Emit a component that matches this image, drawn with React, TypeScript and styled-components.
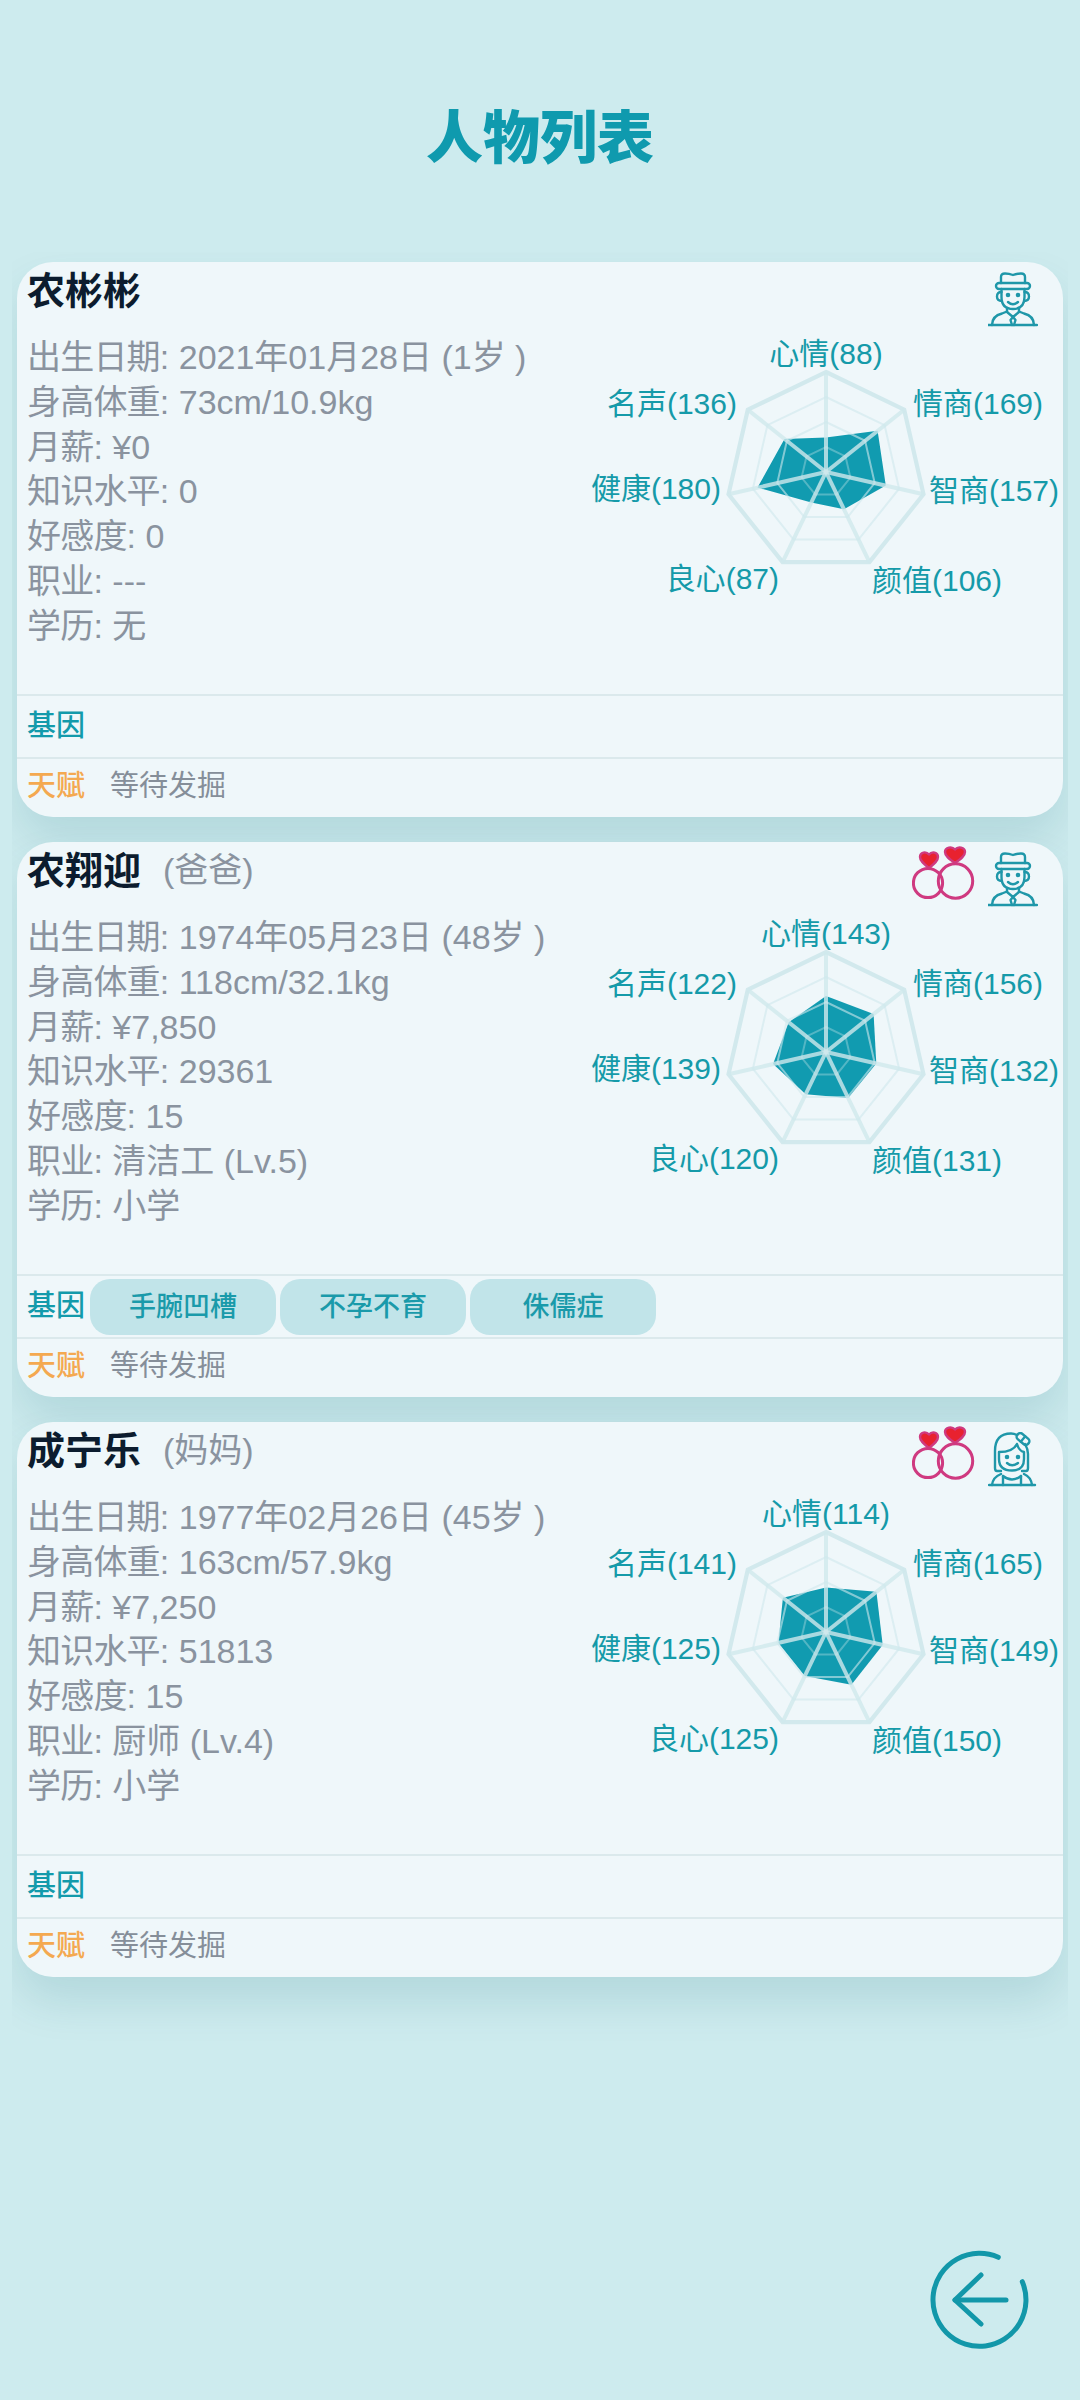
import React from "react";
import styled, { createGlobalStyle } from "styled-components";

const FONT = `"Liberation Sans", "Noto Sans CJK SC", sans-serif`;

const Global = createGlobalStyle`
  html, body { margin: 0; padding: 0; background: #cdebee; }
  body { font-family: ${FONT}; }
`;

const Page = styled.div`
  width: 1080px;
  height: 2400px;
  box-sizing: border-box;
  padding: 0 17px;
  display: flex;
  flex-direction: column;
  background: #cdebee;
  overflow: hidden;
`;

const Title = styled.h1`
  margin: 0;
  height: 262px;
  box-sizing: border-box;
  padding-top: 100px;
  text-align: center;
  font-size: 57px;
  line-height: 76px;
  font-weight: 900;
  color: #0f9aae;
`;

const List = styled.div`
  display: flex;
  flex-direction: column;
  gap: 25px;
  clip-path: inset(-10px -5px -160px -5px);
`;

const CardBox = styled.section`
  height: 555px;
  display: flex;
  flex-direction: column;
  background: #eff7fa;
  border-radius: 36px;
  box-shadow: 0 24px 44px rgba(10, 90, 110, 0.13);
  overflow: hidden;
`;

const Header = styled.div`
  height: 72px;
  flex: none;
  box-sizing: border-box;
  padding: 4px 25px 0 10px;
  display: flex;
  align-items: flex-start;
  justify-content: space-between;
`;

const NameLine = styled.div`
  display: flex;
  align-items: center;
  height: 42px;
`;

const Name = styled.span`
  font-size: 38px;
  font-weight: 700;
  color: #0c1c2e;
`;

const Relation = styled.span`
  margin-left: 22px;
  font-size: 34px;
  color: #8a939f;
`;

const Icons = styled.div`
  display: flex;
  align-items: flex-start;
  gap: 13px;
`;

const PersonIcon = styled.div`
  margin-top: 6px;
`;

const Body = styled.div`
  height: 360px;
  flex: none;
  display: flex;
  justify-content: space-between;
`;

const Info = styled.ul`
  list-style: none;
  margin: 0;
  padding: 1px 0 0 10px;
`;

const InfoRow = styled.li`
  height: 44.8px;
  line-height: 44.8px;
  font-size: 34px;
  color: #8a939f;
  white-space: nowrap;
`;

const InfoLabel = styled.span`
  letter-spacing: -0.8px;
`;

const RadarBox = styled.div`
  position: relative;
  width: 500px;
  height: 360px;
  flex: none;
`;

const RadarSvg = styled.svg`
  position: absolute;
  left: 153px;
  top: 28px;
  width: 220px;
  height: 220px;
`;

const AxisLabel = styled.span<{ $side: "left" | "right" | "center"; $x: number; $y: number }>`
  position: absolute;
  top: ${(p) => p.$y}px;
  ${(p) => (p.$side === "left" ? `right: ${p.$x}px;` : `left: ${p.$x}px;`)}
  ${(p) => (p.$side === "center" ? "transform: translateX(-50%);" : "")}
  height: 40px;
  line-height: 40px;
  font-size: 30px;
  color: #159aa9;
  white-space: nowrap;
`;

const Strip = styled.div<{ $h: number }>`
  height: ${(p) => p.$h}px;
  flex: none;
  box-sizing: border-box;
  border-top: 2px solid #dbe9ec;
  padding-left: 10px;
  display: flex;
  align-items: center;
`;

const StripLabel = styled.span<{ $talent?: boolean }>`
  width: 63px;
  flex: none;
  margin-top: ${(p) => (p.$talent ? "-10px" : "-7px")};
  font-size: 29px;
  font-weight: 500;
  color: ${(p) => (p.$talent ? "#f4a950" : "#139aab")};
`;

const Chips = styled.div`
  display: flex;
  gap: 4px;
  margin-top: 1px;
`;

const Chip = styled.span`
  width: 186px;
  height: 56px;
  box-sizing: border-box;
  padding-bottom: 5px;
  display: flex;
  align-items: center;
  justify-content: center;
  background: #c1e4e9;
  border-radius: 20px;
  font-size: 27px;
  font-weight: 500;
  color: #1a9aaa;
`;

const Pending = styled.span`
  margin-left: 20px;
  margin-top: -10px;
  font-size: 29px;
  color: #858e99;
`;

const Footer = styled.div`
  margin-top: auto;
  padding: 0 28px 45px 0;
  display: flex;
  justify-content: flex-end;
`;

const BackButton = styled.button`
  width: 110px;
  height: 110px;
  padding: 0;
  border: 0;
  background: none;
  display: block;
`;

const ManIcon = () => (
  <svg width="50" height="55" viewBox="0 0 50 55" fill="none" stroke="#1f97a9" strokeWidth="2.4" strokeLinecap="round" strokeLinejoin="round">
    <path d="M13 11V5Q13 1.5 17 1.5Q21 1.5 25 3Q29 1.5 33 1.5Q37 1.5 37 5V11" />
    <rect x="8" y="11" width="34" height="6" rx="3" />
    <path d="M13.5 17V25Q13.5 37 25 37Q36.5 37 36.5 25V17" />
    <path d="M13.5 20Q9 20 9 24.5Q9 29 14 29M36.5 20Q41 20 41 24.5Q41 29 36 29" />
    <circle cx="20" cy="23" r="1.1" fill="#1f97a9" />
    <circle cx="30" cy="23" r="1.1" fill="#1f97a9" />
    <path d="M20 30Q25 34.5 30 30" />
    <path d="M19 36V40L25 45L31 40V36" />
    <path d="M4 53Q4 44 14 41.5L19 39.5M46 53Q46 44 36 41.5L31 39.5" />
    <path d="M25 45L22.5 48L24 53M25 45L27.5 48L26 53" />
    <path d="M0.5 53H49" />
  </svg>
);

const WomanIcon = () => (
  <svg width="50" height="55" viewBox="0 0 50 55" fill="none" stroke="#1f97a9" strokeWidth="2.4" strokeLinecap="round" strokeLinejoin="round">
    <path d="M13 39H9Q7 39 7 36V19Q7 1.5 23 1.5Q26 1.5 29 3" />
    <path d="M34 39H38Q40 39 40 36V22Q40 17 37 12" />
    <path d="M11 20V27Q11 38.5 24 38.5Q36 38.5 36 27V20Q31 19 29 12Q25 20 11 20Z" />
    <g transform="rotate(40 35 7)">
      <rect x="28" y="3.5" width="14" height="7" rx="3" />
      <path d="M35 3.5V10.5" />
    </g>
    <circle cx="19" cy="25" r="1.1" fill="#1f97a9" />
    <circle cx="30" cy="25" r="1.1" fill="#1f97a9" />
    <path d="M19 31Q24 35.5 30 31" />
    <path d="M4 53Q5 45 13 42M44 53Q43 45 36 42" />
    <path d="M15 44Q24 51 33 44" />
    <path d="M15 44V53M33 44V53" />
    <path d="M1 53H47" />
  </svg>
);

const RingsIcon = () => (
  <svg width="63" height="54" viewBox="0 0 63 54" fill="none">
    <circle cx="16" cy="37" r="14.6" stroke="#cf3a80" strokeWidth="3" />
    <circle cx="43.5" cy="35" r="17.2" stroke="#cf3a80" strokeWidth="3" />
    <path d="M17 22C12 18 8 15 8 11C8 6 14 5 17 8.5C20 5 26 6 26 11C26 15 22 18 17 22Z" fill="#e8222f" stroke="#cf3a80" strokeWidth="2.4" strokeLinejoin="round" />
    <path d="M43 17C37 13 33 10 33 6C33 1 40 0 43 3.5C46 0 53 1 53 6C53 10 49 13 43 17Z" fill="#e8222f" stroke="#cf3a80" strokeWidth="2.4" strokeLinejoin="round" />
  </svg>
);

const AXES = ["心情", "情商", "智商", "颜值", "良心", "健康", "名声"];
const CX = 110;
const CY = 110;
const R = 100;
const MAX = 256;

const point = (i: number, r: number) => {
  const a = (i * 2 * Math.PI) / 7;
  return `${(CX + r * Math.sin(a)).toFixed(1)},${(CY - r * Math.cos(a)).toFixed(1)}`;
};
const poly = (fn: (i: number) => number) => AXES.map((_, i) => point(i, fn(i))).join(" ");

const LABEL_POS: { side: "left" | "right" | "center"; x: number; y: number }[] = [
  { side: "center", x: 263, y: 0 },
  { side: "right", x: 350, y: 50 },
  { side: "right", x: 366, y: 137 },
  { side: "right", x: 309, y: 227 },
  { side: "left", x: 284, y: 225 },
  { side: "left", x: 342, y: 135 },
  { side: "left", x: 326, y: 50 },
];

const LEVELS = [
  { l: 0.25, o: 0.35 },
  { l: 0.5, o: 0.6 },
  { l: 0.75, o: 0.6 },
];

const Radar = ({ values }: { values: number[] }) => (
  <RadarBox>
    <RadarSvg viewBox="0 0 220 220" fill="none">
      <polygon points={poly((i) => (values[i] / MAX) * R)} fill="#119bb0" />
      {LEVELS.map(({ l, o }) => (
        <polygon key={l} points={poly(() => R * l)} stroke="#cfe8ec" strokeOpacity={o} strokeWidth="2" />
      ))}
      <polygon points={poly(() => R)} stroke="#d2e9ed" strokeWidth="4.2" strokeLinejoin="miter" />
      {AXES.map((_, i) => {
        const [x, y] = point(i, R).split(",");
        return <line key={i} x1={CX} y1={CY} x2={x} y2={y} stroke="#cfe8ec" strokeOpacity="0.8" strokeWidth="4" />;
      })}
    </RadarSvg>
    {AXES.map((name, i) => (
      <AxisLabel key={name} $side={LABEL_POS[i].side} $x={LABEL_POS[i].x} $y={LABEL_POS[i].y}>
        {name}({values[i]})
      </AxisLabel>
    ))}
  </RadarBox>
);

type Person = {
  name: string;
  relation?: string;
  female?: boolean;
  rows: [string, string][];
  values: number[];
  genes: string[];
};

const PEOPLE: Person[] = [
  {
    name: "农彬彬",
    rows: [["出生日期", "2021年01月28日 (1岁 )"], ["身高体重", "73cm/10.9kg"], ["月薪", "¥0"], ["知识水平", "0"], ["好感度", "0"], ["职业", "---"], ["学历", "无"]],
    values: [88, 169, 157, 106, 87, 180, 136],
    genes: [],
  },
  {
    name: "农翔迎",
    relation: "(爸爸)",
    rows: [["出生日期", "1974年05月23日 (48岁 )"], ["身高体重", "118cm/32.1kg"], ["月薪", "¥7,850"], ["知识水平", "29361"], ["好感度", "15"], ["职业", "清洁工 (Lv.5)"], ["学历", "小学"]],
    values: [143, 156, 132, 131, 120, 139, 122],
    genes: ["手腕凹槽", "不孕不育", "侏儒症"],
  },
  {
    name: "成宁乐",
    relation: "(妈妈)",
    female: true,
    rows: [["出生日期", "1977年02月26日 (45岁 )"], ["身高体重", "163cm/57.9kg"], ["月薪", "¥7,250"], ["知识水平", "51813"], ["好感度", "15"], ["职业", "厨师 (Lv.4)"], ["学历", "小学"]],
    values: [114, 165, 149, 150, 125, 125, 141],
    genes: [],
  },
];

const Card = ({ person }: { person: Person }) => (
  <CardBox>
    <Header>
      <NameLine>
        <Name>{person.name}</Name>
        {person.relation && <Relation>{person.relation}</Relation>}
      </NameLine>
      <Icons>
        {person.relation && <RingsIcon />}
        <PersonIcon>{person.female ? <WomanIcon /> : <ManIcon />}</PersonIcon>
      </Icons>
    </Header>
    <Body>
      <Info>
        {person.rows.map(([label, value]) => (
          <InfoRow key={label}>
            <InfoLabel>{label}</InfoLabel>: {value}
          </InfoRow>
        ))}
      </Info>
      <Radar values={person.values} />
    </Body>
    <Strip $h={63}>
      <StripLabel>基因</StripLabel>
      <Chips>
        {person.genes.map((g) => (
          <Chip key={g}>{g}</Chip>
        ))}
      </Chips>
    </Strip>
    <Strip $h={60}>
      <StripLabel $talent>天赋</StripLabel>
      <Pending>等待发掘</Pending>
    </Strip>
  </CardBox>
);

export default function App() {
  return (
    <Page>
      <Global />
      <Title>人物列表</Title>
      <List>
        {PEOPLE.map((p) => (
          <Card key={p.name} person={p} />
        ))}
      </List>
      <Footer>
        <BackButton aria-label="返回">
          <svg width="110" height="110" viewBox="0 0 110 110" fill="none" stroke="#1297a9" strokeWidth="5" strokeLinecap="round" strokeLinejoin="round">
            <path d="M73.3 12.3A46.5 46.5 0 1 0 97.3 36.7" />
            <path d="M56 30L30 55L56 79" />
            <path d="M30 55H81" />
          </svg>
        </BackButton>
      </Footer>
    </Page>
  );
}
